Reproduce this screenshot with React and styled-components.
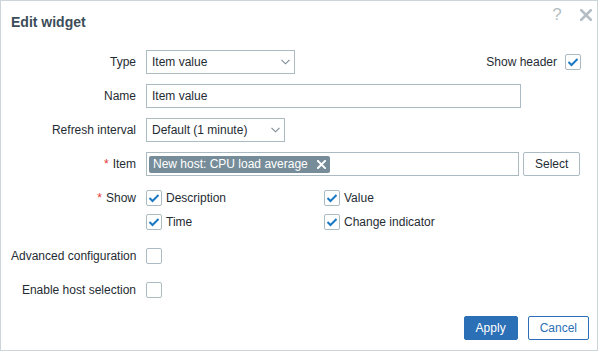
import styled, { createGlobalStyle } from 'styled-components'

const GlobalStyle = createGlobalStyle`
    body {
        margin: 0;
        background: #fff;
        font-family: "Liberation Sans", Arial, sans-serif;
        font-size: 12px;
        color: #1f2c33;
    }
`

const Dialog = styled.div`
    width: 598px;
    height: 351px;
    box-sizing: border-box;
    border: 1px solid #ccd5d9;
    background: #fff;
    display: flex;
    flex-direction: column;
`

const Header = styled.div`
    height: 39px;
    display: flex;
    justify-content: space-between;
    align-items: flex-start;
    padding-left: 10px;

    h4 {
        margin: 13px 0 0;
        font-size: 14px;
        line-height: 16px;
        font-weight: bold;
        color: #3b4d59;
    }
`

const HeaderTools = styled.div`
    display: flex;
    gap: 9px;
    margin-top: 3px;
    padding-right: 1px;
`

const ToolBtn = styled.button`
    width: 20px;
    height: 22px;
    padding: 0;
    border: 0;
    background: none;
    display: grid;
    place-items: center;
    color: #b4bec4;
    font-family: "Liberation Sans", Arial, sans-serif;
    font-size: 17px;
`

const Form = styled.div`
    display: flex;
    flex-direction: column;
    gap: 10px;
    padding: 10px 16px 0 10px;
`

const Row = styled.div`
    display: grid;
    grid-template-columns: 125px 435px;
    column-gap: 10px;
    align-items: ${props => props.$top ? 'start' : 'center'};
`

const Label = styled.div`
    text-align: right;
    line-height: 24px;
    white-space: nowrap;

    .req {
        color: #e33734;
        margin-right: 4px;
    }
`

const Field = styled.div`
    display: flex;
    align-items: center;
    min-height: 24px;
    gap: ${props => props.$gap || 0}px;
`

const Select = styled.div`
    width: ${props => props.$w}px;
    height: 24px;
    box-sizing: border-box;
    border: 1px solid #acbbc2;
    display: flex;
    align-items: center;
    justify-content: space-between;
    padding: 0 4px 0 5px;
    background: #fff;
`

const Input = styled.input`
    width: ${props => props.$w}px;
    height: 24px;
    box-sizing: border-box;
    border: 1px solid #acbbc2;
    padding: 0 5px;
    font-family: inherit;
    font-size: 12px;
    color: #1f2c33;
    outline: none;
`

const Multi = styled.div`
    width: 373px;
    height: 24px;
    box-sizing: border-box;
    border: 1px solid #acbbc2;
    padding: 0 2px;
    display: flex;
    align-items: center;
`

const Tag = styled.span`
    height: 17px;
    display: inline-flex;
    align-items: center;
    gap: 9px;
    padding: 0 4px 0 4px;
    background: #768d99;
    color: #fff;
    border-radius: 2px;
`

const Button = styled.button`
    height: 24px;
    padding: 0 11px;
    box-sizing: border-box;
    border-radius: 2px;
    font-family: inherit;
    font-size: 12px;
    border: 1px solid ${props => props.$primary ? '#2b6fb6' : props.$outline ? '#2b6fb6' : '#acbbc2'};
    background: ${props => props.$primary ? '#2b6fb6' : '#fff'};
    color: ${props => props.$primary ? '#fff' : props.$outline ? '#2b6fb6' : '#1f2c33'};
`

const ShowHeader = styled.div`
    margin-left: auto;
    display: flex;
    align-items: center;
    gap: 8px;
`

const Box = styled.span`
    width: 16px;
    height: 16px;
    box-sizing: border-box;
    border: 1px solid #acbbc2;
    border-radius: 2px;
    background: #fff;
    display: grid;
    place-items: center;
    flex: none;
`

const CheckGrid = styled.div`
    display: grid;
    grid-template-columns: 178px 178px;
    grid-auto-rows: 24px;
`

const CheckItem = styled.label`
    display: flex;
    align-items: center;
    gap: 4px;
`

const Footer = styled.div`
    margin-top: auto;
    display: flex;
    justify-content: flex-end;
    gap: 10px;
    padding: 0 8px 10px;
`

function Checkbox({ checked }) {
    return (
        <Box>
            {checked && (
                <svg width='12' height='10' viewBox='0 0 12 10'>
                    <polyline points='1.5,5 4.5,8 10.5,2' fill='none' stroke='#1b78c2' strokeWidth='2' />
                </svg>
            )}
        </Box>
    )
}

function Chevron() {
    return (
        <svg width='9' height='6' viewBox='0 0 9 6'>
            <polyline points='0.5,0.8 4.5,4.8 8.5,0.8' fill='none' stroke='#7b8a93' strokeWidth='1.1' />
        </svg>
    )
}

function Cross({ size, color, width }) {
    return (
        <svg width={size} height={size} viewBox='0 0 10 10'>
            <path d='M1 1L9 9M9 1L1 9' stroke={color} strokeWidth={width} strokeLinecap='square' />
        </svg>
    )
}

export default function App() {
    return (
        <>
            <GlobalStyle />
            <Dialog>
                <Header>
                    <h4>Edit widget</h4>
                    <HeaderTools>
                        <ToolBtn>?</ToolBtn>
                        <ToolBtn><Cross size={12} color='#b4bec4' width={2.2} /></ToolBtn>
                    </HeaderTools>
                </Header>
                <Form>
                    <Row>
                        <Label>Type</Label>
                        <Field>
                            <Select $w={149}>Item value<Chevron /></Select>
                            <ShowHeader>Show header<Checkbox checked /></ShowHeader>
                        </Field>
                    </Row>
                    <Row>
                        <Label>Name</Label>
                        <Field><Input $w={375} defaultValue='Item value' /></Field>
                    </Row>
                    <Row>
                        <Label>Refresh interval</Label>
                        <Field><Select $w={139}>Default (1 minute)<Chevron /></Select></Field>
                    </Row>
                    <Row>
                        <Label><span className='req'>*</span>Item</Label>
                        <Field $gap={4}>
                            <Multi>
                                <Tag>New host: CPU load average<Cross size={9} color='#fff' width={2.2} /></Tag>
                            </Multi>
                            <Button>Select</Button>
                        </Field>
                    </Row>
                    <Row $top>
                        <Label><span className='req'>*</span>Show</Label>
                        <CheckGrid>
                            <CheckItem><Checkbox checked />Description</CheckItem>
                            <CheckItem><Checkbox checked />Value</CheckItem>
                            <CheckItem><Checkbox checked />Time</CheckItem>
                            <CheckItem><Checkbox checked />Change indicator</CheckItem>
                        </CheckGrid>
                    </Row>
                    <Row>
                        <Label>Advanced configuration</Label>
                        <Field><Checkbox /></Field>
                    </Row>
                    <Row>
                        <Label>Enable host selection</Label>
                        <Field><Checkbox /></Field>
                    </Row>
                </Form>
                <Footer>
                    <Button $primary>Apply</Button>
                    <Button $outline>Cancel</Button>
                </Footer>
            </Dialog>
        </>
    )
}
